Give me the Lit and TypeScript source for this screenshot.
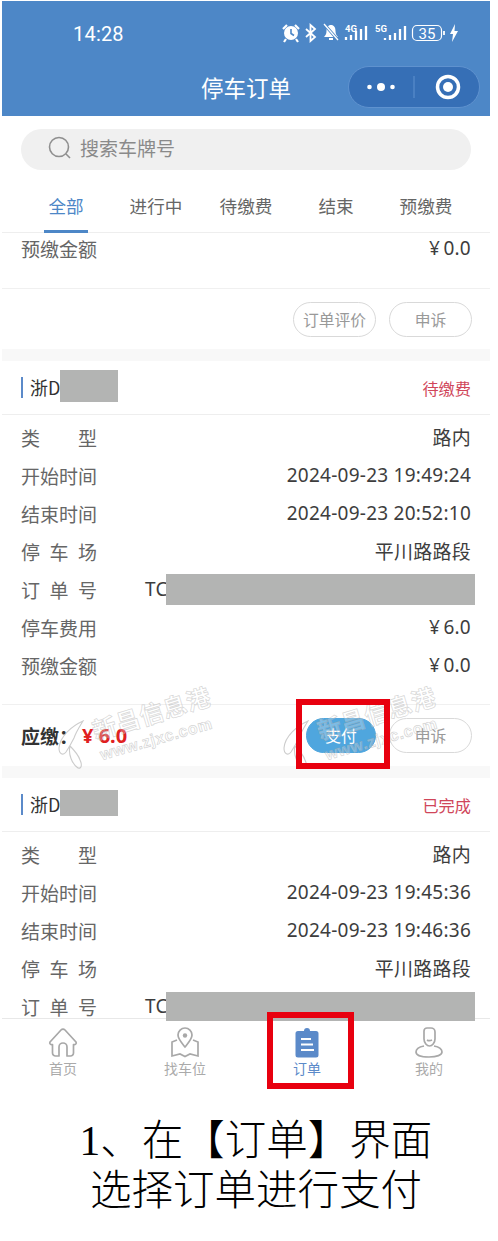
import { LitElement, html, css, svg } from "lit";
import { customElement } from "lit/decorators.js";

type Row = [string, string, boolean?];

const rowsA: Row[] = [
  ["类型", "路内"],
  ["开始时间", "2024-09-23 19:49:24"],
  ["结束时间", "2024-09-23 20:52:10"],
  ["停车场", "平川路路段"],
  ["订单号", "TC", true],
  ["停车费用", "¥\u20096.0"],
  ["预缴金额", "¥\u20090.0"],
];
const rowsB: Row[] = [
  ["类型", "路内"],
  ["开始时间", "2024-09-23 19:45:36"],
  ["结束时间", "2024-09-23 19:46:36"],
  ["停车场", "平川路路段"],
  ["订单号", "TC", true],
];

const logo = svg`<path d="M27 1C16 6 4 16 3 28c0 6 4 8 7 4 4-6 6-10 8-14 2-6 6-12 9-17zM14 26c-2 8 2 18 8 22 4 1 4-4 2-8-2-6-6-10-10-14z" fill="none" stroke="currentColor" stroke-width="1.100"/>`;

@customElement("app-root")
export class AppRoot extends LitElement {
  static styles = css`
    :host { display: block; position: relative; width: 498px; height: 1241px; overflow: hidden; background: #fff;
      font-family: "Noto Sans CJK SC", sans-serif; color: #333; }
    .phone { width: 488px; margin: 1px 0 0 2px; }
    .top { height: 115px; background: #4d87c7; color: #fff; display: flex; flex-direction: column; }
    .status { height: 65px; display: flex; align-items: center; }
    .time { margin-left: 71px; font: 400 20px/1 Roboto, sans-serif; letter-spacing: .2px; margin-top: 1px; }
    .sicons { margin-left: auto; margin-right: 30px; display: block; margin-top: -1px; }
    .nav { position: relative; display: flex; justify-content: center; align-items: center; height: 42px; }
    .title { font-size: 22.5px; line-height: 42px; }
    .capsule { position: absolute; right: 10px; top: 0; width: 132px; height: 42px; box-sizing: border-box; border-radius: 21px;
      background: #366fb6; border: 1px solid #5f92cf; }
    .capsule svg { display: block; }
    .search { margin: 13px 19px 0; height: 41px; box-sizing: border-box; padding: 0 0 4px 27px; border-radius: 21px; background: #f0f0f0;
      display: flex; align-items: center; gap: 8px; color: #8a8a8a; font-size: 19px; }
    .tabs { height: 63px; box-sizing: border-box; padding: 0 19px; display: flex; border-bottom: 1px solid #eee; }
    .tab { width: 90px; text-align: center; color: #666; font-size: 17.6px; line-height: 71px; position: relative; }
    .tab.on { color: #4d87c7; }
    .tab.on::after { content: ""; position: absolute; left: 23px; width: 44px; bottom: -1px; height: 3px; background: #4d87c7; }
    .scroll { height: 785px; overflow: hidden; }
    .inner { margin-top: -4px; }
    .band { height: 12px; background: #f8f8f8; }
    .head { height: 53px; border-bottom: 1px solid #eee; padding: 0 19px; display: flex; align-items: center; justify-content: space-between; }
    .plate { display: flex; align-items: center; font-size: 18px; color: #333; height: 21px; border-left: 2px solid #5b8ac9; padding-left: 7px; margin-top: -1px; }
    .state { color: #d0465a; font-size: 16.2px; }
    .rows { padding: 3px 19px 20px; border-bottom: 1px solid #f0f0f0; }
    .rows.first { padding: 0 19px 21px; }
    .row { height: 38px; display: flex; align-items: center; justify-content: space-between; font-size: 19px; }
    .label { width: 76px; text-align-last: justify; color: #666; font-size: 19px; white-space: nowrap; }
    .val { color: #3d3d3d; font-family: "Noto Sans", "Noto Sans CJK SC", sans-serif; font-size: 19px; letter-spacing: .25px; }
    .row.left { justify-content: flex-start; }
    .row.left .val { margin-left: 48px; }
    .foot { height: 61px; box-sizing: border-box; padding: 13px 18px 0 19px; display: flex; align-items: flex-start; justify-content: flex-end; gap: 13px; }
    .foot.first { height: 60px; }
    .btn { width: 83px; height: 35px; box-sizing: border-box; border: 1px solid #d9d9d9; border-radius: 18px; color: #999; font-size: 15.8px;
      display: flex; align-items: center; justify-content: center; white-space: nowrap; }
    .btn.pay { width: 70px; background: #4fa6de; border-color: #4fa6de; color: #fff; }
    .due { margin-right: auto; display: flex; align-items: center; height: 35px; font-weight: 700; font-size: 19px; color: #333; }
    .due b { color: #e02020; margin-left: 4px; font: 700 20px/1 "Noto Sans", sans-serif; }
    .bar { height: 72px; border-top: 1px solid #e8e8e8; display: flex; }
    .item { width: 122px; display: flex; flex-direction: column; align-items: center; color: #aaa; font-size: 14px; line-height: 20px; padding-top: 6px; }
    .item svg { display: block; height: 34px; margin-bottom: -1px; }
    .item.on { color: #5b8ac9; }
    .caption { margin: 25px 0 0 20px; text-align: center; font-size: 41.5px; line-height: 50px; color: #000; font-weight: 300;
      font-family: "Liberation Serif", "Noto Sans CJK SC", serif; white-space: nowrap; }
    .cover { position: absolute; background: #b3b4b3; }
    .c1 { left: 60px; top: 370px; width: 58px; height: 32px; }
    .c2 { left: 166px; top: 574px; width: 309px; height: 31px; }
    .c3 { left: 60px; top: 790px; width: 58px; height: 26px; }
    .c4 { left: 166px; top: 992px; width: 309px; height: 29px; }
    .frame { position: absolute; box-sizing: border-box; border: 6px solid #e8000f; }
    .f1 { left: 296px; top: 699px; width: 94px; height: 70px; }
    .f2 { left: 267px; top: 1012px; width: 87px; height: 77px; }
    .wm { position: absolute; top: 682px; width: 170px; height: 90px; color: rgba(170,170,170,.6); pointer-events: none; }
    .w1 { left: 52px; }
    .w2 { left: 277px; }
    .wm svg { position: absolute; left: 4px; top: 38px; }
    .wm span { position: absolute; white-space: nowrap; transform-origin: left bottom; }
    .cn { left: 45px; top: 33px; font-size: 24px; letter-spacing: .5px; line-height: 30px; font-weight: 700; transform: rotate(-17deg);
      color: rgba(255,255,255,.25); -webkit-text-stroke: .8px rgba(170,170,170,.45); }
    .en { left: 51px; top: 64px; font: 700 16px/18px "Liberation Sans", sans-serif; letter-spacing: .6px; transform: rotate(-16deg);
      color: rgba(255,255,255,.25); -webkit-text-stroke: .7px rgba(170,170,170,.5); }
  `;

  private card(plate: string, state: string, rows: Row[], due?: string) {
    return html`
      <div class="band"></div>
      <div class="head"><div class="plate">${plate}</div><div class="state">${state}</div></div>
      <div class="rows">${rows.map((r) => this.row(r))}</div>
      ${due
        ? html`<div class="foot">
            <div class="due">应缴：<b>${due}</b></div>
            <div class="btn pay">支付</div><div class="btn">申诉</div>
          </div>`
        : ""}
    `;
  }

  private row(r: Row) {
    return html`<div class="row ${r[2] ? "left" : ""}"><span class="label">${r[0]}</span><span class="val">${r[1]}</span></div>`;
  }

  private statusIcons() {
    return html`<svg class="sicons" width="178" height="20" viewBox="0 0 178 20" fill="none" stroke="#fff">
      <g>
        <circle cx="9" cy="10" r="7" fill="#fff" stroke="none"/>
        <path d="M9 6v4.500l3 2" stroke="#4d87c7" stroke-width="1.600"/>
        <path d="M1 6l4-4M17 6l-4-4M4 16l-2 3M14 16l2 3" stroke-width="2.200"/>
      </g>
      <path d="M24 6l9 8-4.500 4V2l4.500 4-9 8" stroke-width="1.800"/>
      <g transform="translate(41,0)">
        <path d="M8 2c3 0 4.500 2.500 4.500 6 0 3 1 4.500 2.500 6H1c1.500-1.500 2.500-3 2.500-6C3.500 4.500 5 2 8 2z" fill="#fff" stroke="none"/>
        <path d="M6 16h4" stroke-width="2"/><path d="M1 1l14 16" stroke="#4d87c7" stroke-width="3"/><path d="M1 1l14 16" stroke-width="1.300"/>
      </g>
      <text x="63" y="9" font-family="Roboto" font-size="9.500" font-weight="700" fill="#fff" stroke="none">4G</text>
      <path d="M64 17v-3M69 17v-5M74 17v-9M79 17V6M84 17V3" stroke-width="2.300"/>
      <text x="93" y="9" font-family="Roboto" font-size="9.500" font-weight="700" fill="#fff" stroke="none">5G</text>
      <path d="M103 17v-2M108 17v-5M113 17v-7M118 17V6M123 17V3" stroke-width="2.300"/>
      <rect x="130.500" y="2.500" width="29" height="15" rx="4.500" stroke-width="1.200"/>
      <path d="M162 8v4" stroke-width="1.800"/>
      <text x="145" y="15.500" text-anchor="middle" font-family="Roboto" font-size="15" fill="#fff" stroke="none">35</text>
      <path d="M173 1l-5 10h3l-1 8 6-11h-3.500z" fill="#fff" stroke="none"/>
    </svg>`;
  }

  render() {
    return html`
      <div class="phone">
        <div class="top">
          <div class="status"><span class="time">14:28</span>${this.statusIcons()}</div>
          <div class="nav">
            <span class="title">停车订单</span>
            <div class="capsule">
              <svg width="130" height="40" viewBox="0 0 130 40">
                <circle cx="20.500" cy="20" r="2.300" fill="#fff"/><circle cx="32" cy="20" r="4" fill="#fff"/><circle cx="43.500" cy="20" r="2.300" fill="#fff"/>
                <path d="M65 9v22" stroke="#5f92cf"/>
                <circle cx="99" cy="20" r="10.500" fill="none" stroke="#fff" stroke-width="3.500"/><circle cx="99" cy="20" r="5" fill="#fff"/>
              </svg>
            </div>
          </div>
        </div>
        <div class="search">
          <svg width="24" height="26" viewBox="0 0 24 26" fill="none" stroke="#8f8f8f" stroke-width="1.600"><circle cx="11" cy="12" r="9.500"/><path d="M18 19l4 4"/></svg>
          <span>搜索车牌号</span>
        </div>
        <div class="tabs">
          <div class="tab on">全部</div><div class="tab">进行中</div><div class="tab">待缴费</div><div class="tab">结束</div><div class="tab">预缴费</div>
        </div>
        <div class="scroll">
          <div class="inner">
            <div class="rows first">${this.row(["预缴金额", "¥\u20090.0"])}</div>
            <div class="foot first"><div class="btn">订单评价</div><div class="btn">申诉</div></div>
            ${this.card("浙D", "待缴费", rowsA, "¥ 6.0")}
            ${this.card("浙D", "已完成", rowsB)}
          </div>
        </div>
        <div class="bar">
          <div class="item">
            <svg width="30" height="34" viewBox="0 0 30 34" fill="none" stroke="#a8a8a8" stroke-width="1.700"><path d="M2 17L13 5c1.200-1.300 2.800-1.300 4 0l11 12c1 2-1 3-2.500 2.500V28a3 3 0 0 1-3 3H19V22a4 4 0 0 0-8 0v9H7.500a3 3 0 0 1-3-3v-8.500C3 20 1 19 2 17z" stroke-linejoin="round"/></svg>
            <span>首页</span>
          </div>
          <div class="item">
            <svg width="30" height="34" viewBox="0 0 30 34" fill="none" stroke="#a8a8a8" stroke-width="1.700"><path d="M15 22c-4-5-7-8-7-12a7 7 0 0 1 14 0c0 4-3 7-7 12z"/><circle cx="15" cy="10.500" r="2.200" fill="#a8a8a8" stroke="none"/><path d="M7 15l-5 2v14l8-2 5 2.500 5-2.500 8 2V17l-5-2"/></svg>
            <span>找车位</span>
          </div>
          <div class="item on">
            <svg width="30" height="34" viewBox="0 0 30 34"><path d="M6 6h6a3 3 0 0 1 6 0h6a2.500 2.500 0 0 1 2.500 2.500V30a2.500 2.500 0 0 1-2.500 2.500H6A2.500 2.500 0 0 1 3.500 30V8.500A2.500 2.500 0 0 1 6 6z" fill="#5b8ac9"/><path d="M9 14h10M9 19.500h12M9 25h13" stroke="#fff" stroke-width="2"/></svg>
            <span>订单</span>
          </div>
          <div class="item">
            <svg width="30" height="34" viewBox="0 0 30 34" fill="none" stroke="#a8a8a8" stroke-width="1.700"><path d="M10 6a3 3 0 0 1 3-3h4a4 4 0 0 1 4 4v7c0 4-3 7-5.500 7S10 18 10 14z"/><path d="M13 15c1.500 1 3 1 5 0"/><path d="M10 21c-5 1-8 3.500-8 6 0 3 5 5 13 5s13-2 13-5c0-2.500-3-5-8-6"/></svg>
            <span>我的</span>
          </div>
        </div>
        <div class="caption">1、在【订单】界面<br />选择订单进行支付</div>
      </div>
      <div class="wm w1"><svg width="30" height="50" viewBox="0 0 30 50">${logo}</svg><span class="cn">新昌信息港</span><span class="en">www.zjxc.com</span></div>
      <div class="wm w2"><svg width="30" height="50" viewBox="0 0 30 50">${logo}</svg><span class="cn">新昌信息港</span><span class="en">www.zjxc.com</span></div>
      <div class="cover c1"></div><div class="cover c2"></div><div class="cover c3"></div><div class="cover c4"></div>
      <div class="frame f1"></div><div class="frame f2"></div>
    `;
  }
}
